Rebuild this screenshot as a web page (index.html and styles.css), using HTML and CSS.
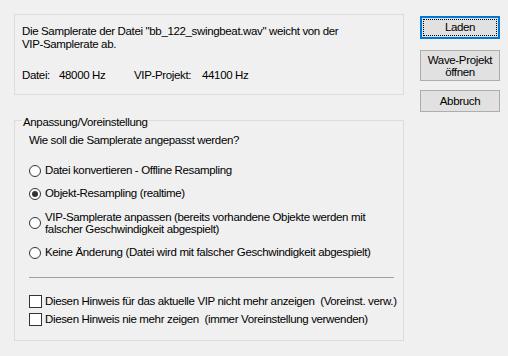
FILE: index.html
```html
<!DOCTYPE html>
<html lang="de">
<head>
<meta charset="utf-8">
<link rel="stylesheet" href="styles.css">
</head>
<body>
<div class="dialog">
  <div class="main">
    <div class="info">
      <p class="msg">Die Samplerate der Datei "bb_122_swingbeat.wav" weicht von der<br>VIP-Samplerate ab.</p>
      <div class="rates">
        <span class="lbl1">Datei:</span><span class="val1">48000 Hz</span><span class="lbl2">VIP-Projekt:</span><span class="val2">44100 Hz</span>
      </div>
    </div>
    <fieldset class="group">
      <legend class="legend">Anpassung/Voreinstellung</legend>
      <div class="question">Wie soll die Samplerate angepasst werden?</div>
      <label class="opt opt1"><span class="radio"></span><span>Datei konvertieren - Offline Resampling</span></label>
      <label class="opt opt2"><span class="radio checked"></span><span>Objekt-Resampling (realtime)</span></label>
      <label class="opt opt3"><span class="radio"></span><span class="two">VIP-Samplerate anpassen (bereits vorhandene Objekte werden mit<br>falscher Geschwindigkeit abgespielt)</span></label>
      <label class="opt opt4"><span class="radio"></span><span>Keine Änderung (Datei wird mit falscher Geschwindigkeit abgespielt)</span></label>
      <div class="sep"></div>
      <label class="chk chk1"><span class="box"></span><span>Diesen Hinweis für das aktuelle VIP nicht mehr anzeigen&nbsp; (Voreinst. verw.)</span></label>
      <label class="chk chk2"><span class="box"></span><span>Diesen Hinweis nie mehr zeigen&nbsp; (immer Voreinstellung verwenden)</span></label>
    </fieldset>
  </div>
  <div class="buttons">
    <button class="btn btn-default"><span class="focus">Laden</span></button>
    <button class="btn btn-tall">Wave-Projekt<br>öffnen</button>
    <button class="btn btn-cancel">Abbruch</button>
  </div>
</div>
</body>
</html>
```
FILE: styles.css
```css
html, body {
  margin: 0;
  padding: 0;
  background: #f0f0f0;
}
body {
  width: 508px;
  height: 356px;
  overflow: hidden;
  font-family: "Liberation Sans", Arial, sans-serif;
  font-size: 11.5px;
  letter-spacing: -0.35px;
  line-height: 13px;
  color: #000;
  white-space: nowrap;
}
.dialog {
  display: flex;
  padding: 14px 0 0 14px;
}
.main {
  width: 390px;
  display: flex;
  flex-direction: column;
}
.info {
  box-sizing: border-box;
  height: 81px;
  border: 1px solid #dcdcdc;
  padding: 10px 7px 0 7px;
}
.msg {
  margin: 0;
}
.rates {
  display: flex;
  margin-top: 18px;
}
.lbl1 { width: 37px; }
.val1 { width: 75px; }
.lbl2 { width: 68px; }
.group {
  box-sizing: border-box;
  margin: 17px 0 0 0;
  padding: 0 0 0 7px;
  height: 229px;
  border: 1px solid #dcdcdc;
  min-width: 0;
}
.legend {
  padding: 4px 1px 0 1px;
  margin-left: 0;
}
.question {
  margin: 5px 0 0 7px;
}
.opt, .chk {
  display: flex;
  align-items: center;
  margin-left: 7px;
}
.opt1 { margin-top: 17px; }
.opt2 { margin-top: 10px; }
.opt3 { margin-top: 11px; }
.opt4 { margin-top: 11px; }
.two { line-height: 12px; }
.radio {
  box-sizing: border-box;
  width: 12px;
  height: 12px;
  border: 1px solid #333;
  border-radius: 50%;
  background: #fff;
  margin-right: 4px;
  flex: none;
  display: flex;
  align-items: center;
  justify-content: center;
}
.radio.checked::after {
  content: "";
  width: 6px;
  height: 6px;
  border-radius: 50%;
  background: #333;
}
.sep {
  height: 1px;
  background: #a0a0a0;
  margin: 18px 9px 0 7px;
}
.chk1 { margin-top: 17px; }
.chk2 { margin-top: 5px; }
.box {
  box-sizing: border-box;
  width: 13px;
  height: 13px;
  border: 1px solid #333;
  background: #fff;
  margin-right: 3px;
  flex: none;
}
.buttons {
  display: flex;
  flex-direction: column;
  margin-left: 16px;
  padding-top: 2px;
  width: 80px;
}
.btn {
  box-sizing: border-box;
  width: 80px;
  margin: 0;
  padding: 0;
  font: inherit;
  letter-spacing: inherit;
  color: #000;
  background: #e1e1e1;
  border: 1px solid #adadad;
  border-radius: 0;
}
.btn-default {
  height: 23px;
  border: 2px solid #0078d7;
  padding: 1px;
  display: flex;
}
.focus {
  flex: 1;
  display: flex;
  align-items: center;
  justify-content: center;
  border: 1px dotted #000;
}
.btn-tall {
  height: 31px;
  margin-top: 11px;
  line-height: 12px;
}
.btn-cancel {
  height: 22px;
  margin-top: 9px;
}
```
